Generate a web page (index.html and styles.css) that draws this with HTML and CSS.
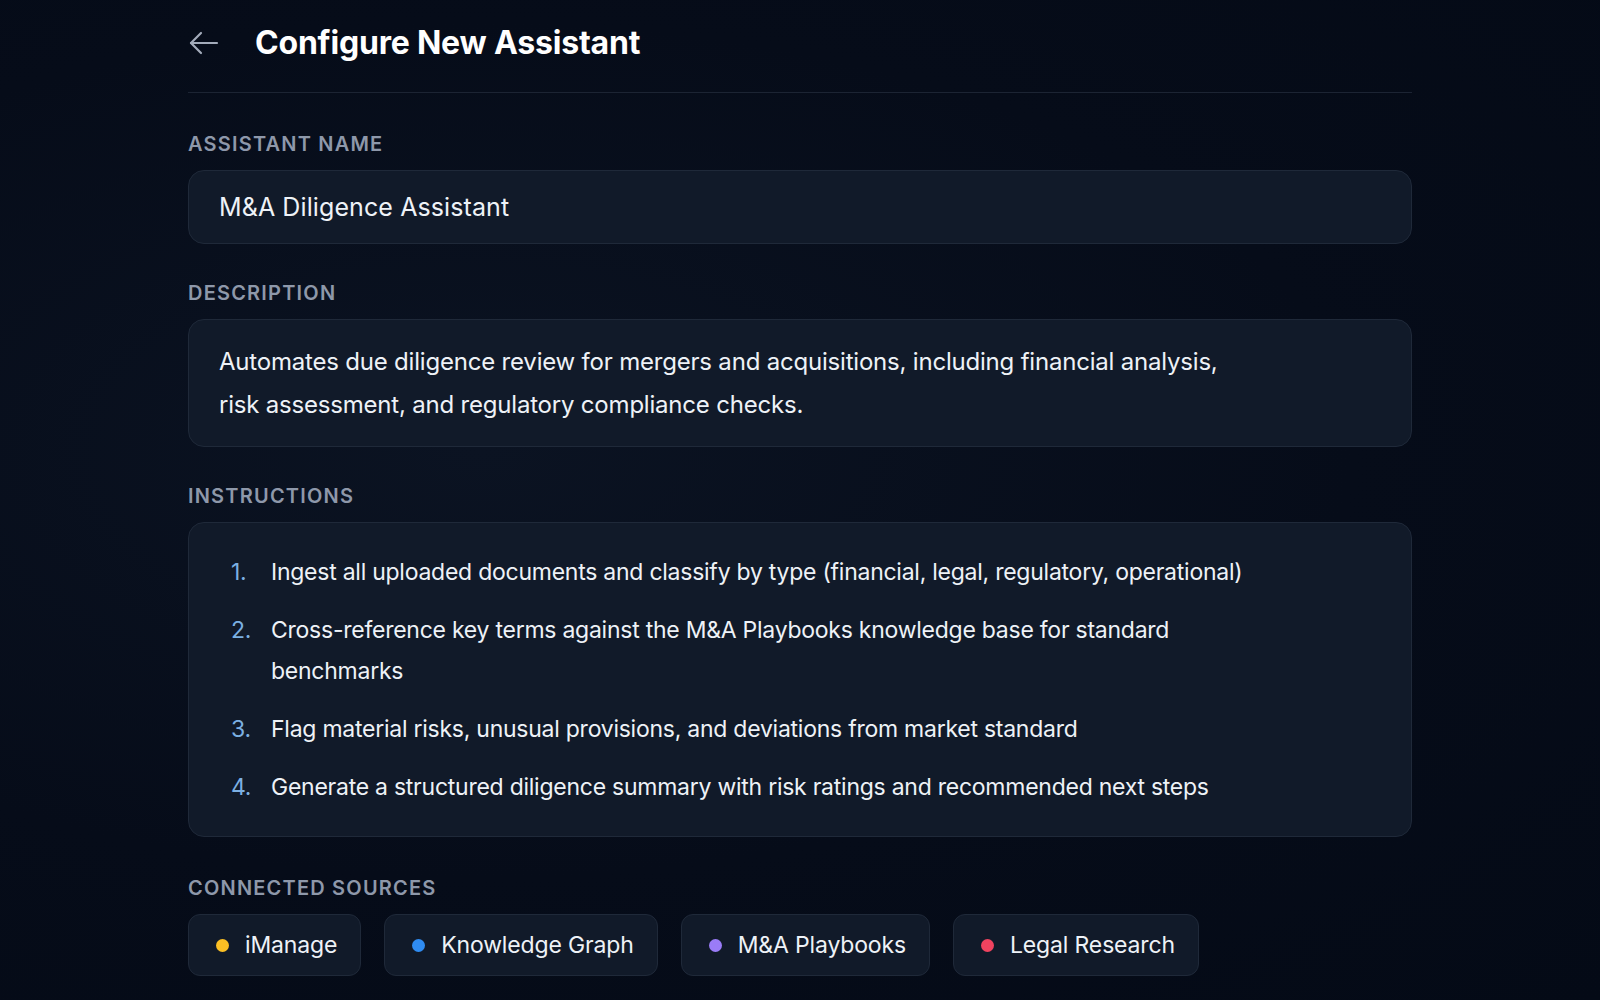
FILE: index.html
```html
<!DOCTYPE html>
<html lang="en">
<head>
<meta charset="utf-8">
<title>Configure New Assistant</title>
<link rel="stylesheet" href="styles.css">
</head>
<body>
<main class="page">
  <header class="header">
    <button class="back" aria-label="Back">
      <svg width="30" height="24" viewBox="0 0 30 24" fill="none" stroke="#a3abba" stroke-width="2.2" stroke-linecap="round" stroke-linejoin="round">
        <path d="M28 12H2"/>
        <path d="M12 2L2 12l10 10"/>
      </svg>
    </button>
    <h1 class="title">Configure New Assistant</h1>
  </header>

  <section class="field field-first">
    <div class="label">Assistant Name</div>
    <div class="box box-input">M&amp;A Diligence Assistant</div>
  </section>

  <section class="field">
    <div class="label">Description</div>
    <div class="box box-desc"><p class="desc">Automates due diligence review for mergers and acquisitions, including financial analysis, risk assessment, and regulatory compliance checks.</p></div>
  </section>

  <section class="field">
    <div class="label">Instructions</div>
    <div class="box box-list">
      <ol class="steps">
        <li class="step"><span class="num">1.</span><span class="step-text">Ingest all uploaded documents and classify by type (financial, legal, regulatory, operational)</span></li>
        <li class="step"><span class="num">2.</span><span class="step-text">Cross-reference key terms against the M&amp;A Playbooks knowledge base for standard benchmarks</span></li>
        <li class="step"><span class="num">3.</span><span class="step-text">Flag material risks, unusual provisions, and deviations from market standard</span></li>
        <li class="step"><span class="num">4.</span><span class="step-text">Generate a structured diligence summary with risk ratings and recommended next steps</span></li>
      </ol>
    </div>
  </section>

  <section class="field field-sources">
    <div class="label">Connected Sources</div>
    <div class="chips">
      <span class="chip"><span class="dot dot-yellow"></span>iManage</span>
      <span class="chip"><span class="dot dot-blue"></span>Knowledge Graph</span>
      <span class="chip"><span class="dot dot-purple"></span>M&amp;A Playbooks</span>
      <span class="chip"><span class="dot dot-red"></span>Legal Research</span>
    </div>
  </section>
</main>
</body>
</html>
```

FILE: styles.css
```css
* {
  box-sizing: border-box;
}

html, body {
  margin: 0;
  padding: 0;
}

body {
  background: radial-gradient(ellipse at 30% 45%, #0b1322 0%, #060c19 55%, #040a16 100%);
  min-height: 1000px;
  color: #eef2f7;
  font-family: Inter, "Noto Sans", "Liberation Sans", sans-serif;
}

.page {
  width: 1224px;
  margin: 0 auto;
}

.header {
  display: flex;
  align-items: center;
  gap: 36px;
  padding: 24px 0 30px;
  border-bottom: 1px solid #1c2433;
}

.back {
  display: flex;
  align-items: center;
  justify-content: center;
  padding: 0;
  margin: 0 0 0 1px;
  background: none;
  border: none;
  width: 30px;
  height: 38px;
}

.title {
  margin: 0;
  font-size: 32px;
  line-height: 38px;
  font-weight: 700;
  color: #ffffff;
  letter-spacing: -0.2px;
}

.field {
  margin-top: 37px;
}

.field-first {
  margin-top: 39px;
}

.field-sources {
  margin-top: 39px;
}

.label {
  font-size: 20px;
  line-height: 24px;
  font-weight: 600;
  letter-spacing: 0.06em;
  text-transform: uppercase;
  color: #8e98aa;
  margin-bottom: 14px;
}

.box {
  background: #111a29;
  border: 1px solid #1f2939;
  border-radius: 16px;
  font-size: 24px;
  color: #eef2f7;
}

.box-input {
  padding: 17px 30px;
  line-height: 38px;
  font-size: 25px;
  letter-spacing: 0.1px;
}

.box-desc {
  padding: 20px 30px;
  line-height: 43px;
  letter-spacing: -0.2px;
}

.desc {
  margin: 0;
  max-width: 1020px;
}

.box-list {
  padding: 29px 40px 28px 42px;
  font-size: 23px;
  letter-spacing: -0.25px;
}

.steps {
  list-style: none;
  margin: 0;
  padding: 0;
  display: flex;
  flex-direction: column;
  gap: 17px;
}

.step {
  display: grid;
  grid-template-columns: 28px 1fr;
  column-gap: 12px;
  line-height: 41px;
}

.num {
  color: #7cb0e2;
}

.step-text {
  max-width: 1010px;
}

.chips {
  display: flex;
  gap: 23px;
}

.chip {
  display: inline-flex;
  align-items: center;
  gap: 16px;
  height: 62px;
  padding: 0 23px 0 27px;
  background: #111a29;
  border: 1px solid #1f2939;
  border-radius: 12px;
  font-size: 23px;
  letter-spacing: -0.15px;
  color: #eef2f7;
}

.dot {
  width: 13px;
  height: 13px;
  border-radius: 50%;
  flex: none;
}

.dot-yellow { background: #fbbf24; }
.dot-blue { background: #2f8cf2; }
.dot-purple { background: #9a7cf7; }
.dot-red { background: #f0435f; }
```
